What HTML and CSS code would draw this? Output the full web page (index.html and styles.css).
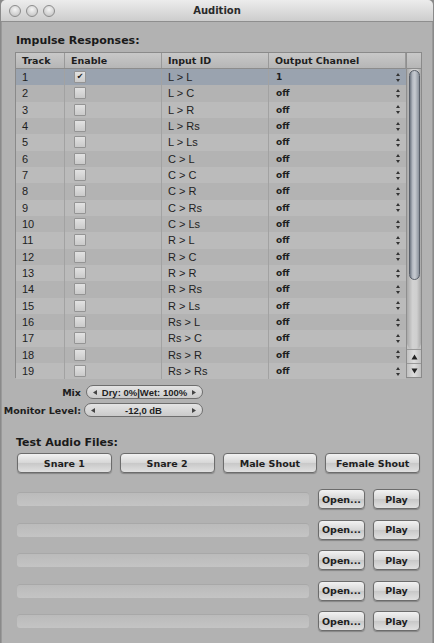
FILE: index.html
```html
<!DOCTYPE html>
<html>
<head>
  <title>Audition</title>
  <link rel="stylesheet" href="styles.css">
</head>
<body>
  <div class="window">
    <div class="titlebar">
      <div class="lights">
        <span class="light"></span><span class="light"></span><span class="light"></span>
      </div>
      <div class="title">Audition</div>
    </div>

    <div class="content">
      <h2 class="section">Impulse Responses:</h2>

      <div class="table">
        <div class="table-main">
          <div class="row head">
            <div class="cell">Track</div>
            <div class="cell">Enable</div>
            <div class="cell">Input ID</div>
            <div class="cell">Output Channel</div>
          </div>
          <div class="rows" id="rows"></div>
        </div>
        <div class="scroll-col">
          <div class="corner"></div>
          <div class="scrollbar">
            <div class="track"><div class="thumb"></div></div>
            <div class="arrow"><svg width="7" height="6" viewBox="0 0 7 6"><path d="M3.5 0.5 L6.5 5.5 L0.5 5.5 Z" fill="#222"/></svg></div>
            <div class="arrow"><svg width="7" height="6" viewBox="0 0 7 6"><path d="M0.5 0.5 L6.5 0.5 L3.5 5.5 Z" fill="#222"/></svg></div>
          </div>
        </div>
      </div>

      <div class="controls">
        <div class="control">
          <span class="control-label">Mix</span>
          <div class="pill">
            <svg class="tri" width="4" height="5" viewBox="0 0 4 5"><path d="M4 0 L0 2.5 L4 5 Z" fill="#444"/></svg>
            <span class="pill-value">Dry: 0%|Wet: 100%</span>
            <svg class="tri" width="4" height="5" viewBox="0 0 4 5"><path d="M0 0 L4 2.5 L0 5 Z" fill="#444"/></svg>
          </div>
        </div>
        <div class="control">
          <span class="control-label">Monitor Level:</span>
          <div class="pill wide">
            <svg class="tri" width="4" height="5" viewBox="0 0 4 5"><path d="M4 0 L0 2.5 L4 5 Z" fill="#444"/></svg>
            <span class="pill-value">-12,0 dB</span>
            <svg class="tri" width="4" height="5" viewBox="0 0 4 5"><path d="M0 0 L4 2.5 L0 5 Z" fill="#444"/></svg>
          </div>
        </div>
      </div>

      <h2 class="section audio">Test Audio Files:</h2>

      <div class="presets">
        <button class="btn">Snare 1</button>
        <button class="btn">Snare 2</button>
        <button class="btn">Male Shout</button>
        <button class="btn">Female Shout</button>
      </div>

      <div class="files">
        <div class="file-row"><div class="field"></div><button class="btn small">Open...</button><button class="btn small">Play</button></div>
        <div class="file-row"><div class="field"></div><button class="btn small">Open...</button><button class="btn small">Play</button></div>
        <div class="file-row"><div class="field"></div><button class="btn small">Open...</button><button class="btn small">Play</button></div>
        <div class="file-row"><div class="field"></div><button class="btn small">Open...</button><button class="btn small">Play</button></div>
        <div class="file-row"><div class="field"></div><button class="btn small">Open...</button><button class="btn small">Play</button></div>
      </div>
    </div>
  </div>

  <script>
    // speaker routing pairs, input > output
    const speakers = ['L', 'C', 'R', 'Rs', 'Ls'];
    const pairs = [];
    speakers.forEach(a => speakers.forEach(b => pairs.push(a + ' > ' + b)));

    const rows = document.getElementById('rows');
    for (let i = 0; i < 19; i++) {
      const on = i === 0;
      const row = document.createElement('div');
      row.className = 'row' + (on ? ' selected' : '') + (i % 2 ? ' odd' : '');
      row.innerHTML = `
        <div class="cell num">${i + 1}</div>
        <div class="cell"><span class="check${on ? ' checked' : ''}">${on ? '&#10004;' : ''}</span></div>
        <div class="cell io">${pairs[i]}</div>
        <div class="cell out"><span>${on ? '1' : 'off'}</span>
          <svg class="stepper" width="4" height="9" viewBox="0 0 4 9"><path d="M2 0 L4 3 L0 3 Z M0 6 L4 6 L2 9 Z" fill="#333"/></svg>
        </div>`;
      rows.appendChild(row);
    }
  </script>
</body>
</html>
```

FILE: styles.css
```css
body {
  margin: 0;
  background: #8a8a8a;
  font-family: "DejaVu Sans", "Liberation Sans", sans-serif;
  color: #1e1e1e;
}

.window {
  width: 432px;
  height: 643px;
  margin-left: 1px;
  background: #b2b2b2;
  border-radius: 5px 5px 0 0;
  box-shadow: inset 1px 0 0 #9a9a9a, inset -1px 0 0 #9a9a9a;
  overflow: hidden;
}

.titlebar {
  height: 21px;
  background: linear-gradient(#ececec, #cdcdcd);
  border-bottom: 1px solid #8e8e8e;
  display: flex;
  align-items: center;
  position: relative;
}

.lights {
  display: flex;
  gap: 5px;
  padding-left: 8px;
}

.light {
  width: 10px;
  height: 10px;
  border-radius: 50%;
  background: radial-gradient(circle at 50% 35%, #f4f4f4, #bcbcbc);
  border: 1px solid #8c8c8c;
}

.title {
  position: absolute;
  left: 0;
  right: 0;
  text-align: center;
  font-size: 10px;
  font-weight: bold;
  color: #2a2a2a;
}

.content {
  padding: 0 13px 0 14px;
}

.section {
  margin: 0;
  font-size: 11px;
  font-weight: bold;
  color: #1a1a1a;
  padding: 12px 0 0 1px;
  height: 18px;
}

/* table */

.table {
  display: flex;
  border: 1px solid #8a8a8a;
  width: 405px;
  height: 324px;
  background: #b8b8b8;
}

.table-main {
  flex: 1;
}

.row {
  display: grid;
  grid-template-columns: 49px 97px 107px 137px;
  height: 16.33px;
  align-items: center;
  font-size: 10px;
  background: #bbbbbb;
}

.row.odd {
  background: #b3b3b3;
}

.row.selected {
  background: #9aa3af;
}

.row.head {
  height: 15px;
  background: linear-gradient(#c8c8c8, #b6b6b6);
  border-bottom: 1px solid #8c8c8c;
  font-weight: bold;
  font-size: 9.5px;
}

.row.head .cell {
  border-right: 1px solid #999;
  height: 15px;
  line-height: 15px;
}

.cell {
  padding-left: 6px;
  white-space: nowrap;
  height: 100%;
  display: flex;
  align-items: center;
  box-sizing: border-box;
}

.rows .cell {
  border-right: 1px solid #a2a2a2;
}

.rows .cell:last-child {
  border-right: none;
}

.num {
  font-family: "Liberation Sans", sans-serif;
  font-size: 11px;
}

.io {
  font-family: "Liberation Sans", sans-serif;
  font-size: 11px;
  color: #222;
}

.out {
  font-size: 9px;
  font-weight: bold;
  justify-content: space-between;
  padding-right: 6px;
}

.out span {
  padding-left: 1px;
}

.check {
  width: 10px;
  height: 10px;
  margin-left: 3px;
  border: 1px solid #949494;
  border-radius: 1px;
  background: linear-gradient(#e2e2e2, #cacaca);
  font-size: 8px;
  line-height: 10px;
  text-align: center;
  color: #1a1a1a;
}

/* scrollbar */

.scroll-col {
  width: 15px;
  display: flex;
  flex-direction: column;
  border-left: 1px solid #8e8e8e;
}

.corner {
  height: 15px;
  background: linear-gradient(#c8c8c8, #b6b6b6);
  border-bottom: 1px solid #8c8c8c;
}

.scrollbar {
  flex: 1;
  display: flex;
  flex-direction: column;
  background: #c4c4c4;
}

.track {
  flex: 1;
  padding: 1px 1px 0 2px;
  background: linear-gradient(90deg, #a8a8a8, #d2d2d2 40%, #cfcfcf 70%, #a8a8a8);
  border-radius: 0 0 6px 6px;
}

.thumb {
  height: 210px;
  border-radius: 6px;
  background: linear-gradient(90deg, #6e7682, #b7bcc4 30%, #c6cad0 55%, #8b929c);
  border: 1px solid #585e68;
  box-sizing: border-box;
}

.arrow {
  height: 13px;
  display: flex;
  align-items: center;
  justify-content: center;
  background: linear-gradient(90deg, #c0c0c0, #dedede, #c0c0c0);
  border-top: 1px solid #999;
}

/* sliders */

.controls {
  display: flex;
  flex-direction: column;
  gap: 4px;
  padding-top: 7px;
}

.control {
  display: flex;
  align-items: center;
  margin-left: -12px;
}

.control-label {
  width: 78px;
  text-align: right;
  font-size: 9.5px;
  font-weight: bold;
  padding-right: 3px;
}

.pill {
  width: 117px;
  height: 14px;
  margin-left: 2px;
  border: 1px solid #6e6e6e;
  border-radius: 7px;
  background: linear-gradient(#e4e4e4, #cacaca);
  display: flex;
  align-items: center;
  padding: 0 6px;
  box-sizing: border-box;
}

.pill.wide {
  width: 119px;
  margin-left: 0;
}

.pill-value {
  flex: 1;
  text-align: center;
  white-space: nowrap;
  font-family: "Liberation Sans", sans-serif;
  font-size: 9.5px;
  font-weight: bold;
}

.section.audio {
  padding-top: 19px;
  height: 16px;
}

/* buttons */

.presets {
  display: flex;
  gap: 8px;
  padding: 1px 0 0 2px;
}

.btn {
  font-family: "DejaVu Sans", "Liberation Sans", sans-serif;
  font-size: 9.5px;
  font-weight: bold;
  color: #1e1e1e;
  height: 20px;
  border: 1px solid #6c6c6c;
  border-radius: 4px;
  background: linear-gradient(#f2f2f2, #d6d6d6 50%, #c8c8c8 51%, #e0e0e0);
  box-shadow: 0 1px 1px rgba(0, 0, 0, 0.25);
  padding: 0;
}

.presets .btn {
  width: 95px;
}

.files {
  display: flex;
  flex-direction: column;
  gap: 10.5px;
  padding: 16px 0 0 2px;
}

.file-row {
  display: flex;
  align-items: center;
  gap: 8px;
}

.field {
  width: 292px;
  height: 14px;
  margin-right: 1px;
  border-radius: 3px;
  background: linear-gradient(#bababa, #c4c4c4);
  box-shadow: inset 0 1px 0 #a8a8a8;
}

.btn.small {
  width: 47px;
}
```
